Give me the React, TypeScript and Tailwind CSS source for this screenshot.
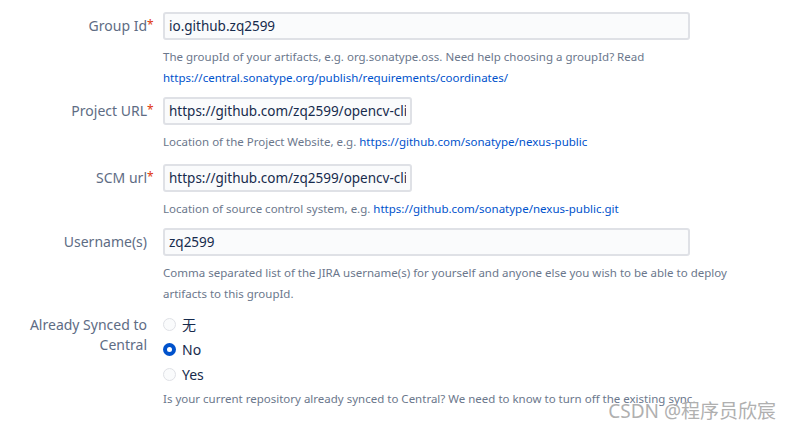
import React from "react";

const font = { fontFamily: '"Noto Sans", "Noto Sans CJK SC", sans-serif' };

function Label({ text, required }: { text: React.ReactNode; required?: boolean }) {
  return (
    <div className="w-[163px] shrink-0 pr-[16px] text-right text-[14px] leading-[20px] text-[#5e6c84]">
      <span className="relative">
        {text}
        {required && <span className="absolute left-full top-[-1px] text-[12px] text-[#de350b]">*</span>}
      </span>
    </div>
  );
}

function Help({ children, className = "mt-[6px]" }: { children: React.ReactNode; className?: string }) {
  return <div className={`${className} text-[11.5px] leading-[21px] text-[#6b778c]`}>{children}</div>;
}

function Field({
  label,
  required,
  value,
  wide,
  className,
  children,
}: {
  label: string;
  required?: boolean;
  value: string;
  wide?: boolean;
  className?: string;
  children: React.ReactNode;
}) {
  return (
    <div className={`flex ${className ?? ""}`}>
      <div className="flex h-[28px] items-center">
        <Label text={label} required={required} />
      </div>
      <div className="flex-1">
        <input
          readOnly
          value={value}
          className={`h-[28px] rounded-[3px] border-2 border-[#dfe1e6] bg-[#fafbfc] px-[4px] text-[13.5px] text-[#172b4d] outline-none ${
            wide ? "w-[527px]" : "w-[249px]"
          }`}
          style={font}
        />
        <Help>{children}</Help>
      </div>
    </div>
  );
}

function Radio({ label, checked }: { label: string; checked?: boolean }) {
  return (
    <div className="flex h-[25px] items-center gap-[6px]">
      {checked ? (
        <span className="flex h-[13px] w-[13px] items-center justify-center rounded-full bg-[#0052cc]">
          <span className="h-[5px] w-[5px] rounded-full bg-white" />
        </span>
      ) : (
        <span className="h-[13px] w-[13px] rounded-full border border-[#dfe1e6] bg-[#fafbfc]" />
      )}
      <span className="text-[14px] text-[#172b4d]">{label}</span>
    </div>
  );
}

const link = "text-[#0052cc]";

export default function App() {
  return (
    <div className="relative h-[431px] w-[790px] overflow-hidden bg-white pt-[12px]" style={font}>
      <Field label="Group Id" required value="io.github.zq2599" wide>
        The groupId of your artifacts, e.g. org.sonatype.oss. Need help choosing a groupId? Read
        <br />
        <span className={link}>https://central.sonatype.org/publish/requirements/coordinates/</span>
      </Field>
      <Field label="Project URL" required value="https://github.com/zq2599/opencv-client" className="mt-[9px]">
        Location of the Project Website, e.g.{" "}
        <span className={link}>https://github.com/sonatype/nexus-public</span>
      </Field>
      <Field label="SCM url" required value="https://github.com/zq2599/opencv-client" className="mt-[12px]">
        Location of source control system, e.g.{" "}
        <span className={link}>https://github.com/sonatype/nexus-public.git</span>
      </Field>
      <Field label="Username(s)" value="zq2599" wide className="mt-[9px]">
        Comma separated list of the JIRA username(s) for yourself and anyone else you wish to be able to deploy
        <br />
        artifacts to this groupId.
      </Field>
      <div className="mt-[8px] flex">
        <div className="pt-[3px]">
          <Label text={<>Already Synced to<br />Central</>} />
        </div>
        <div className="flex-1">
          <Radio label="无" />
          <Radio label="No" checked />
          <Radio label="Yes" />
          <Help className="mt-[1px]">
            Is your current repository already synced to Central? We need to know to turn off the existing sync.
          </Help>
        </div>
      </div>
      <div className="absolute bottom-[9px] right-[14px] text-[19px] leading-[22px] text-[#b0b0b0]">
        CSDN @程序员欣宸
      </div>
    </div>
  );
}
